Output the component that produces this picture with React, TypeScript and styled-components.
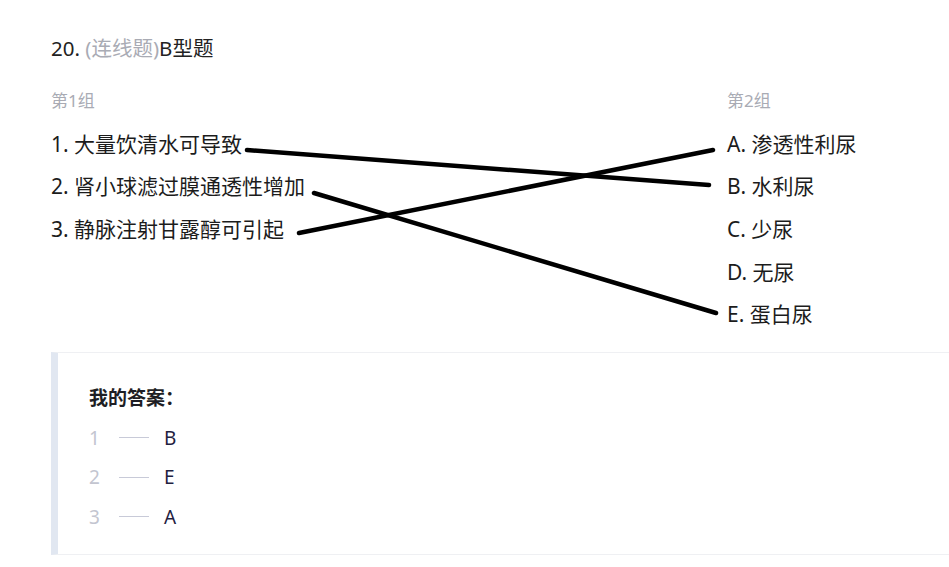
import React from "react";
import styled, { createGlobalStyle } from "styled-components";

const GlobalStyle = createGlobalStyle`
  html, body {
    margin: 0;
    padding: 0;
    background: #ffffff;
    overflow: hidden;
  }
  body {
    font-family: "Noto Sans", "Noto Sans CJK SC", sans-serif;
    color: #1c1c1c;
  }
`;

const Page = styled.div`
  display: flex;
  flex-direction: column;
  padding: 34px 0 0 51px;
`;

const Title = styled.div`
  font-size: 20.5px;
  line-height: 28px;
  color: #222222;
`;

const TypeTag = styled.span`
  color: #a9abb4;
`;

const Matching = styled.div`
  position: relative;
  display: flex;
  margin-top: 18px;
`;

const Column = styled.div<{ $width?: number }>`
  display: flex;
  flex-direction: column;
  width: ${(p) => (p.$width ? `${p.$width}px` : "auto")};
  flex-shrink: 0;
`;

const GroupLabel = styled.div`
  height: 42.7px;
  line-height: 42.7px;
  font-size: 17px;
  color: #a9abb4;
`;

const Item = styled.div`
  height: 42.7px;
  line-height: 42.7px;
  font-size: 21px;
  color: #1c1c1c;
  white-space: nowrap;
`;

const Links = styled.svg`
  position: absolute;
  left: 0;
  top: 0;
  pointer-events: none;
`;

const AnswerBox = styled.div`
  margin-top: 16px;
  width: calc(100vw - 51px);
  border-top: 1px solid #eff0f3;
  border-bottom: 1px solid #eff0f3;
  border-left: 7px solid #e1e7f1;
  padding: 31px 0 17px 31px;
  box-sizing: border-box;
  display: flex;
  flex-direction: column;
`;

const AnswerHeading = styled.div`
  font-size: 19px;
  line-height: 28px;
  font-weight: 700;
  color: #1e1e24;
  margin-bottom: 6px;
`;

const AnswerRow = styled.div`
  display: flex;
  align-items: center;
  height: 39.5px;
  font-size: 19px;
`;

const AnswerNum = styled.span`
  width: 30px;
  color: #c3c5d0;
`;

const Dash = styled.span`
  width: 30px;
  height: 1px;
  background: #c8cad8;
  margin-right: 15px;
`;

const AnswerLetter = styled.span`
  color: #1f2140;
`;

const left = ["1. 大量饮清水可导致", "2. 肾小球滤过膜通透性增加", "3. 静脉注射甘露醇可引起"];
const right = ["A. 渗透性利尿", "B. 水利尿", "C. 少尿", "D. 无尿", "E. 蛋白尿"];
const answers = [
  ["1", "B"],
  ["2", "E"],
  ["3", "A"],
];

const lines = [
  [196, 70, 658, 105],
  [263, 113, 665, 233],
  [248, 153, 662, 70],
];

export default function App() {
  return (
    <>
      <GlobalStyle />
      <Page>
        <Title>
          20. <TypeTag>(连线题)</TypeTag>B型题
        </Title>
        <Matching>
          <Column $width={676}>
            <GroupLabel>第1组</GroupLabel>
            {left.map((t) => (
              <Item key={t}>{t}</Item>
            ))}
          </Column>
          <Column>
            <GroupLabel>第2组</GroupLabel>
            {right.map((t) => (
              <Item key={t}>{t}</Item>
            ))}
          </Column>
          <Links width={700} height={260}>
            {lines.map(([x1, y1, x2, y2], i) => (
              <line
                key={i}
                x1={x1}
                y1={y1}
                x2={x2}
                y2={y2}
                stroke="#000"
                strokeWidth={4.5}
                strokeLinecap="round"
              />
            ))}
          </Links>
        </Matching>
        <AnswerBox>
          <AnswerHeading>我的答案：</AnswerHeading>
          {answers.map(([n, l]) => (
            <AnswerRow key={n}>
              <AnswerNum>{n}</AnswerNum>
              <Dash />
              <AnswerLetter>{l}</AnswerLetter>
            </AnswerRow>
          ))}
        </AnswerBox>
      </Page>
    </>
  );
}
